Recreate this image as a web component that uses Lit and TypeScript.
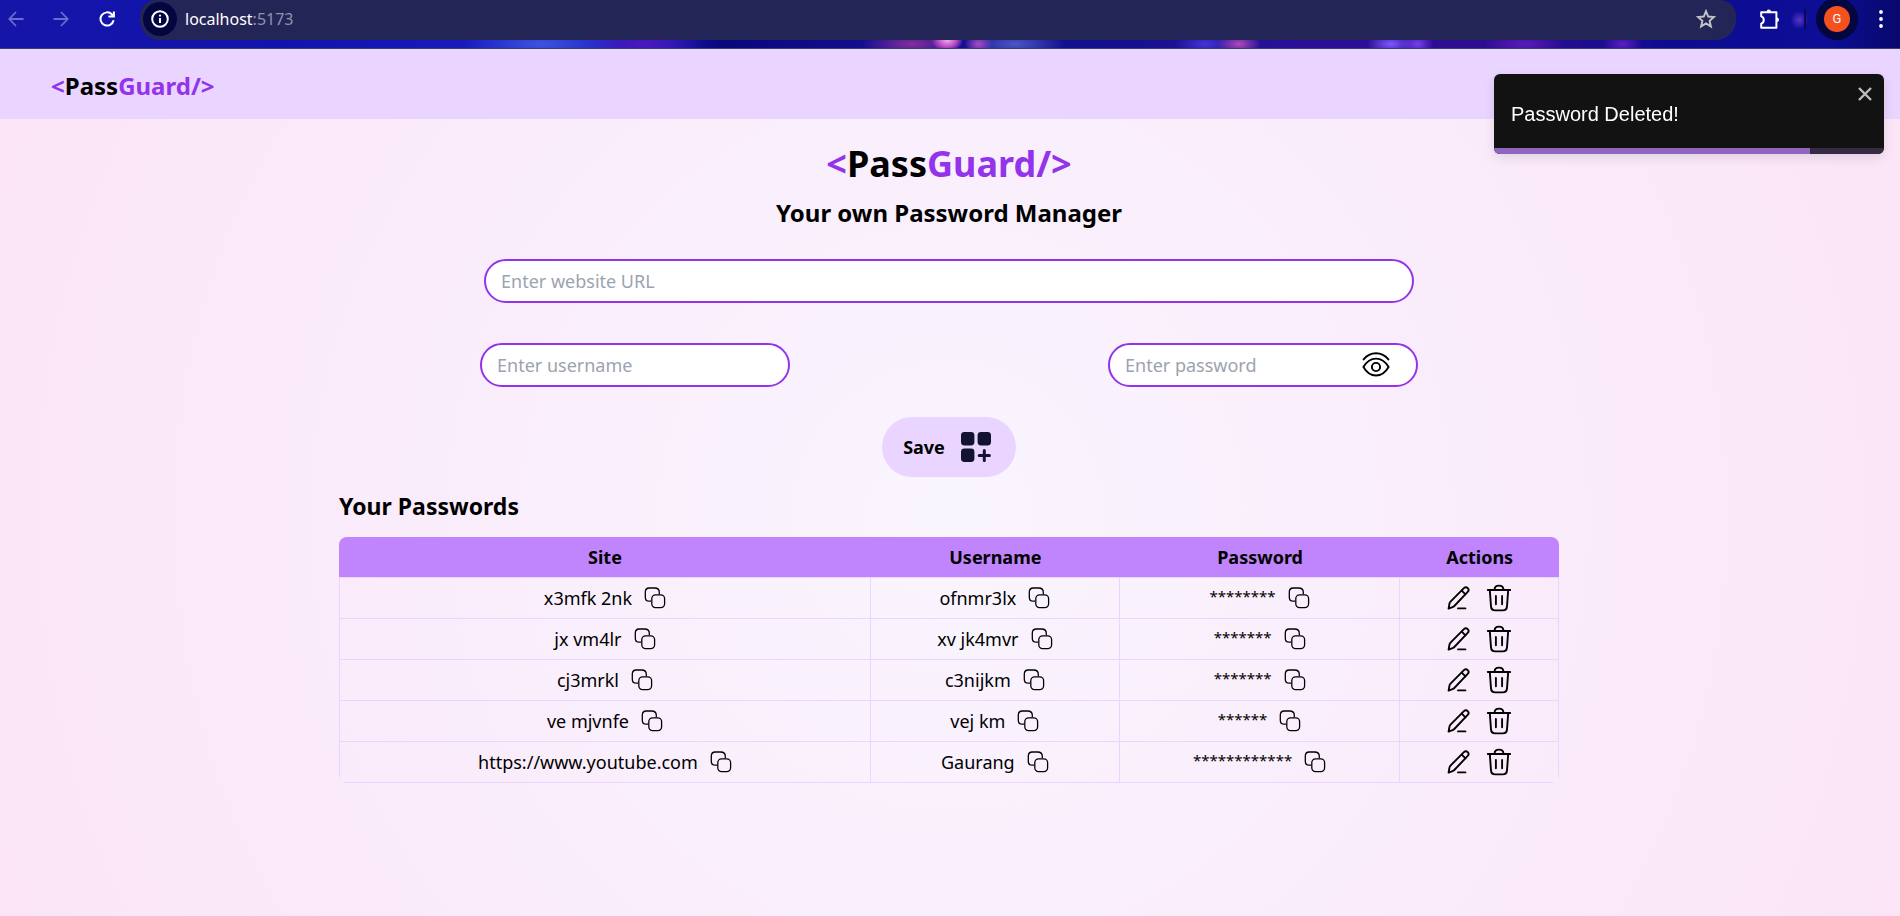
import { LitElement, html, css } from "lit";
import { customElement, state } from "lit/decorators.js";

interface Entry {
  site: string;
  username: string;
  length: number;
}

const copyIcon = html`<svg viewBox="0 0 22 22" width="22" height="22" fill="none" stroke="#000" stroke-width="1.3" aria-hidden="true">
  <path d="M7 14.2H5.4C2.2 14.2 1.3 13 1.3 10.2V5.2C1.3 2 2.4 1 5.3 1H10.5C14 1 15.3 2 15.3 5.2V7.3" />
  <rect x="7.8" y="7.8" width="12.8" height="12.8" rx="3.8" />
</svg>`;

const editIcon = html`<svg viewBox="0 0 24 24" width="24" height="24" fill="none" stroke="#000" stroke-width="1.9" stroke-linecap="round" stroke-linejoin="round" aria-hidden="true">
  <path d="M1.6 22.6L2.5 17.4C2.7 16.7 3 16.1 3.5 15.6L16.9 2.2C18 1.1 19.6 1 20.7 2.1C21.8 3.2 21.8 4.8 20.7 5.9L7.3 20C6.8 20.5 6.2 20.9 5.5 21.2Z" />
  <path d="M14.8 4.6L18.4 8.3" />
  <path d="M11 22.4H18.4" />
</svg>`;

const trashIcon = html`<svg viewBox="0 0 26 28" width="26" height="28" fill="none" stroke="#000" stroke-width="1.9" stroke-linecap="round" stroke-linejoin="round" aria-hidden="true">
  <path d="M1.8 6H24.2" />
  <path d="M3.8 6L5 22.4C5.2 25.3 6.5 26.4 9.2 26.4H16.8C19.5 26.4 20.8 25.3 21 22.4L22.2 6" />
  <path d="M8.6 5.6C8.6 2.6 10.4 1.6 13 1.6C15.6 1.6 17.4 2.6 17.4 5.6" />
  <path d="M9.9 12V20.2M16.1 12V20.2" />
</svg>`;

const eyeIcon = html`<svg viewBox="0 0 28 26" width="28" height="26" fill="none" stroke="#000" stroke-width="1.9" stroke-linecap="round" stroke-linejoin="round" aria-hidden="true">
  <path d="M1.6 7.4C8.2-.8 19.8-.8 26.4 7.4" />
  <path d="M1.4 15C8 3.8 20 3.8 26.6 15C20 26.4 8 26.4 1.4 15Z" />
  <circle cx="14" cy="15" r="4.1" />
</svg>`;

const gridAddIcon = html`<svg viewBox="0 0 30 30" width="30" height="30" fill="#121331" aria-hidden="true">
  <rect width="13.4" height="13.4" rx="3.4" />
  <rect x="16.6" width="13.4" height="13.4" rx="3.4" />
  <rect y="16.6" width="13.4" height="13.4" rx="3.4" />
  <path d="M23.3 18.4V28.6M18.2 23.5H28.4" stroke="#121331" stroke-width="3" stroke-linecap="round" />
</svg>`;

@customElement("browser-bar")
export class BrowserBar extends LitElement {
  static styles = css`
    :host {
      display: flex;
      align-items: flex-start;
      height: 49px;
      border-bottom: 1px solid #3a3f6e;
      background:
        radial-gradient(circle at 94.7% 20px, #5a34c8 0, transparent 9px),
        radial-gradient(ellipse 16px 12px at 49.85% 40px, #e9b0e6 0, #b846c4 60%, transparent 100%),
        radial-gradient(ellipse 14px 12px at 51.5% 44px, #a84bc0 0, transparent 100%),
        radial-gradient(ellipse 50px 16px at 53.4% 44px, #4a58c4 0, transparent 100%),
        radial-gradient(ellipse 50px 14px at 48% 44px, #84309c 0, transparent 100%),
        radial-gradient(ellipse 22px 12px at 65.2% 44px, #b04cb8 0, transparent 100%),
        radial-gradient(ellipse 30px 12px at 63.4% 44px, #4634d8 0, transparent 100%),
        radial-gradient(ellipse 24px 12px at 73.2% 44px, #7e58ff 0, transparent 100%),
        radial-gradient(ellipse 16px 12px at 74.6% 44px, #7840f0 0, transparent 100%),
        radial-gradient(ellipse 40px 12px at 80.2% 44px, #5a1cba 0, transparent 100%),
        radial-gradient(ellipse 20px 12px at 85.4% 44px, #5c1ec0 0, transparent 100%),
        radial-gradient(ellipse 80px 20px at 28.5% 44px, #3c55e0 0, transparent 100%),
        radial-gradient(ellipse 60px 20px at 33.8% 44px, #4c18c0 0, transparent 100%),
        linear-gradient(90deg, #1515a8 0, #1114ac 15%, #1b1cc0 28%, #1d18b0 35%, #08077c 38%, #170f92 47%, #12108e 58%, #2a1098 68%, #2f0c90 80%, #0c0c90 88%, #0d0e96 96%, #08086c 100%);
      font-family: "Noto Sans", sans-serif;
    }
    button {
      display: flex;
      align-items: center;
      justify-content: center;
      flex: none;
      border: 0;
      padding: 0;
      background: none;
      height: 38px;
    }
    .arrow {
      color: #6b6cce;
    }
    .back {
      width: 32px;
    }
    .forward {
      width: 58px;
    }
    .reload {
      width: 33px;
      color: #fff;
    }
    .address {
      display: flex;
      align-items: center;
      flex: 1;
      height: 38px;
      margin-left: 17px;
      padding: 0 20px 2px 3px;
      border-radius: 16px 16px 20px 20px;
      background: #242557;
    }
    .info {
      width: 34px;
      height: 34px;
      border-radius: 50%;
      background: #040640;
      margin-right: 8px;
    }
    .url {
      flex: 1;
      min-width: 0;
      color: #fff;
      font-size: 16px;
      line-height: 24px;
    }
    .port {
      color: #9192ab;
    }
    .puzzle {
      width: 68px;
    }
    .divider {
      width: 2px;
      height: 20px;
      margin-top: 9px;
      background: #0a0a50;
    }
    .avatar {
      width: 42px;
      height: 42px;
      margin: -2px 10px 0 10px;
      border-radius: 50%;
      background: #040640;
    }
    .initial {
      width: 26px;
      border-radius: 50%;
      background: #f4511e;
      color: #fff;
      font: 13px/26px Roboto, sans-serif;
    }
    .menu {
      width: 26px;
      margin-right: 6px;
    }
  `;

  render() {
    return html`
      <button class="arrow back" aria-label="Back">
        <svg viewBox="0 0 16 16" width="16" height="16" fill="none" stroke="currentColor" stroke-width="1.8"><path d="M15.5 8H1.5M8 1L1.3 8L8 15" /></svg>
      </button>
      <button class="arrow forward" aria-label="Forward">
        <svg viewBox="0 0 16 16" width="16" height="16" fill="none" stroke="currentColor" stroke-width="1.8"><path d="M.5 8H14.5M8 1L14.7 8L8 15" /></svg>
      </button>
      <button class="reload" aria-label="Reload">
        <svg viewBox="0 0 16 16" width="16" height="16" fill="none" stroke="currentColor" stroke-width="2"><path d="M14.6 9.3A6.6 6.6 0 1 1 13 3.5L14 4.9M14.9.4V5.6H9.4" /></svg>
      </button>
      <div class="address">
        <button class="info" aria-label="Site information">
          <svg viewBox="0 0 18 18" width="18" height="18" fill="none" stroke="#fff" stroke-width="2"><circle cx="9" cy="9" r="7.8" /><path d="M9 8V13M9 4.8V6.6" /></svg>
        </button>
        <div class="url">localhost<span class="port">:5173</span></div>
        <button aria-label="Bookmark this tab">
          <svg viewBox="0 0 20 20" width="20" height="20" fill="none" stroke="#c4c4c8" stroke-width="1.9"><path d="M10 2.2L12.2 7.5L18 8L13.6 11.8L14.9 17.4L10 14.4L5.1 17.4L6.4 11.8L2 8L7.8 7.5Z" /></svg>
        </button>
      </div>
      <button class="puzzle" aria-label="Extensions">
        <svg viewBox="0 0 22 22" width="22" height="22" fill="none" stroke="#fff" stroke-width="2" stroke-linejoin="round"><path d="M2.2 4.2H17.4V19.8H2.2V15.6C5.6 14.6 5.6 9.4 2.2 8.4Z" /><path d="M7.6 3.8A2.2 2.2 0 0 1 12 3.8ZM17.8 9.6A2.2 2.2 0 0 1 17.8 14Z" fill="#fff" stroke="none" /></svg>
      </button>
      <div class="divider"></div>
      <button class="avatar" aria-label="Profile"><span class="initial">G</span></button>
      <button class="menu" aria-label="Menu">
        <svg viewBox="0 0 4 18" width="4" height="18" fill="#fff"><circle cx="2" cy="2" r="1.9" /><circle cx="2" cy="9" r="1.9" /><circle cx="2" cy="16" r="1.9" /></svg>
      </button>
    `;
  }
}

@customElement("app-root")
export class AppRoot extends LitElement {
  @state() private entries: Entry[] = [
    { site: "x3mfk 2nk", username: "ofnmr3lx", length: 8 },
    { site: "jx vm4lr", username: "xv jk4mvr", length: 7 },
    { site: "cj3mrkl", username: "c3nijkm", length: 7 },
    { site: "ve mjvnfe", username: "vej km", length: 6 },
    { site: "https://www.youtube.com", username: "Gaurang", length: 12 },
  ];

  static styles = css`
    * {
      box-sizing: border-box;
    }
    :host {
      display: flex;
      flex-direction: column;
      min-height: 100vh;
      font-family: "Noto Sans", sans-serif;
      font-size: 18px;
      line-height: 30px;
      color: #000;
    }
    button {
      font: inherit;
      color: inherit;
      border: 0;
      padding: 0;
      background: none;
      cursor: pointer;
    }
    h1,
    h2,
    p {
      margin: 0;
    }
    .nav {
      display: flex;
      align-items: center;
      height: 70px;
      padding: 4px 51px 0;
      background: #e9d5ff;
    }
    .brand {
      font-weight: 700;
      font-size: 24px;
      line-height: 36px;
    }
    .accent {
      color: #9333ea;
    }
    .page {
      flex: 1;
      padding: 22px 22px 0 20px;
      background: radial-gradient(circle at 50% 50%, #f9f5ff 0%, #fbe5f7 100%);
    }
    .content {
      max-width: 1220px;
      margin: 0 auto;
    }
    .title {
      font-size: 36px;
      line-height: 46px;
      font-weight: 700;
      text-align: center;
    }
    .subtitle {
      padding-top: 8px;
      font-size: 24px;
      line-height: 36px;
      font-weight: 700;
      text-align: center;
    }
    .form {
      display: flex;
      flex-direction: column;
      align-items: center;
      max-width: 938px;
      margin: 0 auto;
      padding-top: 28px;
    }
    .row {
      display: flex;
      justify-content: space-between;
      width: 100%;
      padding-top: 40px;
    }
    .row.single {
      padding: 0 4px;
    }
    .field {
      display: flex;
      align-items: center;
      width: 310px;
      height: 44px;
      padding: 0 26px 0 15px;
      border: 2px solid #9333ea;
      border-radius: 22px;
      background: #fff;
    }
    .single .field {
      width: 100%;
    }
    .input {
      flex: 1;
      min-width: 0;
      border: 0;
      padding: 0;
      outline: 0;
      background: none;
      font: inherit;
    }
    .input::placeholder {
      color: #9ca3af;
      opacity: 1;
    }
    .icon {
      display: inline-flex;
    }
    .save {
      display: flex;
      align-items: center;
      gap: 16px;
      height: 60px;
      margin-top: 30px;
      padding: 0 25px 0 21px;
      border-radius: 30px;
      background: #e9d5ff;
      font-weight: 700;
    }
    .heading {
      padding: 11px 0 13px;
      font-size: 23px;
      line-height: 36px;
      font-weight: 700;
    }
    .table {
      width: 100%;
      table-layout: fixed;
      border-collapse: separate;
      border-spacing: 0;
      border-radius: 8px;
      overflow: hidden;
    }
    .site {
      width: 43.6%;
    }
    .user {
      width: 20.4%;
    }
    .pass {
      width: 23%;
    }
    th {
      height: 40px;
      padding: 0;
      background: #c084fc;
    }
    td {
      height: 41px;
      padding: 0;
      border: 0 solid #e9d5ff;
      border-width: 0 1px 1px 0;
    }
    td:first-child {
      border-left-width: 1px;
    }
    tbody tr:first-child td {
      height: 42px;
      border-top-width: 1px;
    }
    .cell {
      display: flex;
      align-items: center;
      justify-content: center;
      gap: 12px;
    }
    .actions {
      gap: 15px;
    }
    .mask {
      font-size: 15px;
      line-height: 24px;
      padding-bottom: 4px;
    }
    .toast {
      position: fixed;
      top: 74px;
      right: 16px;
      display: flex;
      flex-direction: column;
      width: 390px;
      height: 80px;
      border-radius: 6px;
      overflow: hidden;
      background: #121212;
      color: #fff;
      font: 20px/24px "Liberation Sans", sans-serif;
      box-shadow: 0 4px 12px rgba(0, 0, 0, 0.1);
    }
    .toast-body {
      display: flex;
      flex: 1;
      align-items: center;
      padding: 6px 12px 0 17px;
    }
    .message {
      flex: 1;
    }
    .close {
      align-self: flex-start;
      display: flex;
      padding-top: 7px;
    }
    .track {
      height: 6px;
      background: #352b42;
    }
    .progress {
      height: 100%;
      background: #9065c0;
    }
  `;

  private brand() {
    return html`<span class="accent">&lt;</span>Pass<span class="accent">Guard/&gt;</span>`;
  }

  private copyable(text: string, masked = false) {
    return html`<div class="cell">
      <span class=${masked ? "mask" : "text"}>${text}</span>
      <button class="icon" aria-label="Copy">${copyIcon}</button>
    </div>`;
  }

  private remove(entry: Entry) {
    this.entries = this.entries.filter((e) => e !== entry);
  }

  render() {
    return html`
      <browser-bar></browser-bar>
      <nav class="nav"><div class="brand">${this.brand()}</div></nav>
      <main class="page">
        <div class="content">
          <h1 class="title">${this.brand()}</h1>
          <p class="subtitle">Your own Password Manager</p>
          <form class="form" @submit=${(e: Event) => e.preventDefault()}>
            <div class="row single">
              <label class="field"><input class="input" type="text" aria-label="Website URL" placeholder="Enter website URL" /></label>
            </div>
            <div class="row">
              <label class="field"><input class="input" type="text" aria-label="Username" placeholder="Enter username" /></label>
              <div class="field">
                <input class="input" type="password" aria-label="Password" placeholder="Enter password" />
                <button class="icon" type="button" aria-label="Show password">${eyeIcon}</button>
              </div>
            </div>
            <button class="save" type="submit">Save ${gridAddIcon}</button>
          </form>
          <h2 class="heading">Your Passwords</h2>
          <table class="table">
            <thead>
              <tr>
                <th class="site">Site</th>
                <th class="user">Username</th>
                <th class="pass">Password</th>
                <th>Actions</th>
              </tr>
            </thead>
            <tbody>
              ${this.entries.map(
                (entry) => html`<tr>
                  <td>${this.copyable(entry.site)}</td>
                  <td>${this.copyable(entry.username)}</td>
                  <td>${this.copyable("*".repeat(entry.length), true)}</td>
                  <td>
                    <div class="cell actions">
                      <button class="icon" aria-label="Edit">${editIcon}</button>
                      <button class="icon" aria-label="Delete" @click=${() => this.remove(entry)}>${trashIcon}</button>
                    </div>
                  </td>
                </tr>`
              )}
            </tbody>
          </table>
        </div>
      </main>
      <div class="toast" role="alert">
        <div class="toast-body">
          <span class="message">Password Deleted!</span>
          <button class="close" aria-label="Close">
            <svg viewBox="0 0 14 14" width="14" height="14" fill="none" stroke="#bdbdbd" stroke-width="2.4"><path d="M1 1L13 13M13 1L1 13" /></svg>
          </button>
        </div>
        <div class="track"><div class="progress" style="width: 81%"></div></div>
      </div>
    `;
  }
}
